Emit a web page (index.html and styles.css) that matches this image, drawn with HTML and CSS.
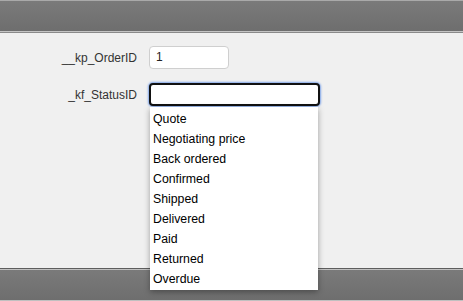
FILE: index.html
```html
<!DOCTYPE html>
<html>
<head>
<meta charset="utf-8">
<link rel="stylesheet" href="styles.css">
</head>
<body>
<div class="page">
  <header class="bar top"></header>
  <main class="content">
    <div class="row">
      <label class="label">__kp_OrderID</label>
      <div class="input small">1</div>
    </div>
    <div class="row second">
      <label class="label">_kf_StatusID</label>
      <div class="field">
        <div class="input focus"></div>
        <ul class="menu">
          <li>Quote</li>
          <li>Negotiating price</li>
          <li>Back ordered</li>
          <li>Confirmed</li>
          <li>Shipped</li>
          <li>Delivered</li>
          <li>Paid</li>
          <li>Returned</li>
          <li>Overdue</li>
        </ul>
      </div>
    </div>
  </main>
  <footer class="bar bottom"></footer>
</div>
</body>
</html>
```
FILE: styles.css
```css
html, body {
  margin: 0;
  padding: 0;
  width: 463px;
  height: 301px;
  overflow: hidden;
  background: #f0f0f0;
  font-family: "Liberation Sans", Arial, sans-serif;
}
.page {
  display: flex;
  flex-direction: column;
  height: 301px;
}
.bar {
  background: linear-gradient(#7a7a7a, #6e6e6e);
  flex: none;
}
.top {
  height: 30px;
  border-top: 1px solid #a9a9a9;
  border-bottom: 1px solid #c4c4c4;
  box-shadow: 0 1px 0 #8a8a8a;
  margin-bottom: 1px;
}
.bottom {
  height: 30px;
  border-top: 1px solid #c0c0c0;
  border-bottom: 1px solid #c0c0c0;
  box-shadow: 0 -1px 0 #5e5e5e, 0 1px 0 #5e5e5e;
}
.content {
  flex: 1;
  padding-top: 13px;
  position: relative;
}
.row {
  display: flex;
  align-items: center;
}
.second {
  margin-top: 14px;
  align-items: flex-start;
}
.label {
  width: 137px;
  text-align: right;
  font-size: 12px;
  color: #333;
  margin-right: 12px;
}
.second .label {
  padding-top: 5px;
}
.input {
  box-sizing: border-box;
  height: 23px;
  background: #fff;
  border: 1px solid #cfcfcf;
  border-radius: 4px;
  font-size: 12px;
  line-height: 21px;
  padding-left: 6px;
  color: #222;
}
.small {
  width: 80px;
}
.field {
  position: relative;
}
.focus {
  width: 171px;
  border: 2px solid #111;
  box-shadow: 0 0 2px 1px #7fa4e8;
}
.menu {
  position: absolute;
  left: 1px;
  top: 24px;
  width: 168px;
  margin: 0;
  padding: 2px 0 1px;
  list-style: none;
  background: #fff;
  box-shadow: 0 2px 6px rgba(0,0,0,0.35);
  z-index: 2;
}
.menu li {
  height: 20px;
  line-height: 20px;
  padding-left: 3px;
  font-size: 12.3px;
  color: #000;
}
```
